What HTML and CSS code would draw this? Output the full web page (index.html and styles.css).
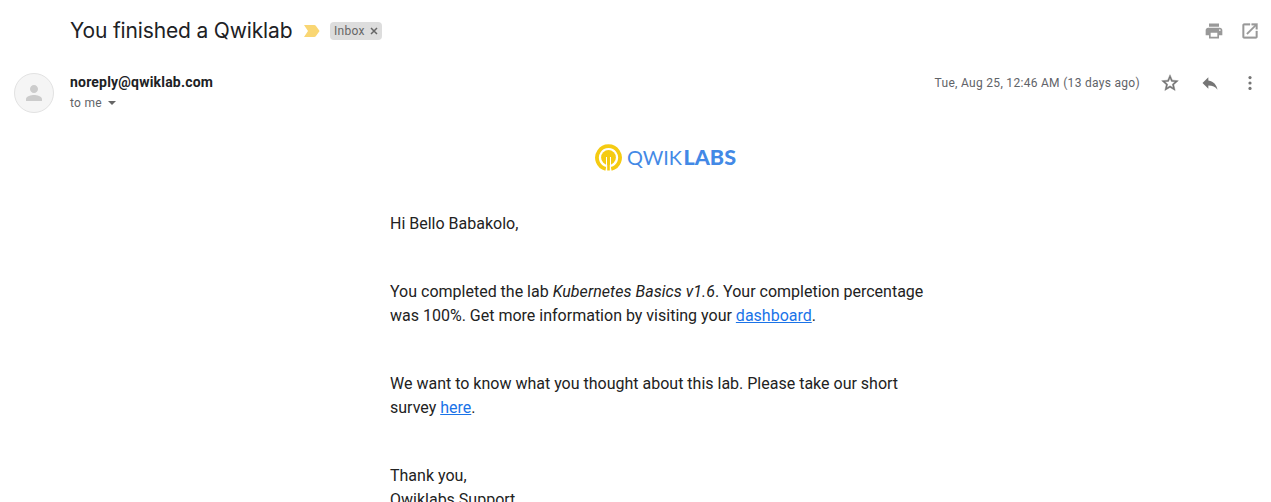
FILE: index.html
```html
<!DOCTYPE html>
<html lang="en">
<head>
<meta charset="utf-8">
<title>You finished a Qwiklab</title>
<link rel="stylesheet" href="styles.css">
</head>
<body>
<main class="mail">
  <header class="subject-row">
    <h1 class="subject">You finished a Qwiklab</h1>
    <svg class="importance" width="16" height="12" viewBox="0 0 16 12"><path fill="#f9d673" d="M0 0h10.2q1 0 1.600.8L15.600 6l-3.800 5.200q-.6.8-1.600.8H0L4 6z"/></svg>
    <span class="label"><span class="label-name">Inbox</span><svg width="8" height="8" viewBox="0 0 8 8"><path d="M1 1l6 6M7 1L1 7" stroke="#666" stroke-width="1.500"/></svg></span>
    <div class="tools">
      <svg width="20" height="20" viewBox="0 0 24 24" fill="#999"><path d="M19 8H5c-1.660 0-3 1.340-3 3v6h4v4h12v-4h4v-6c0-1.660-1.340-3-3-3zm-3 11H8v-5h8v5zm3-7c-.55 0-1-.45-1-1s.45-1 1-1 1 .45 1 1-.45 1-1 1zm-1-9H6v4h12V3z"/></svg>
      <svg width="20" height="20" viewBox="0 0 24 24" fill="#999" stroke="#999" stroke-width=".4"><path d="M19 19H5V5h7V3H5c-1.110 0-2 .9-2 2v14c0 1.100.89 2 2 2h14c1.100 0 2-.9 2-2v-7h-2v7zM14 3v2h3.590l-9.830 9.830 1.410 1.410L19 6.410V10h2V3h-7z"/></svg>
    </div>
  </header>
  <section class="sender-row">
    <div class="avatar"><svg width="24" height="24" viewBox="0 0 24 24" fill="#cccccc"><path d="M12 12c2.210 0 4-1.790 4-4s-1.790-4-4-4-4 1.790-4 4 1.790 4 4 4zm0 2c-2.670 0-8 1.340-8 4v2h16v-2c0-2.660-5.330-4-8-4z"/></svg></div>
    <div class="sender">
      <div class="address">noreply@qwiklab.com</div>
      <div class="recipient">to me<svg width="8" height="4" viewBox="0 0 8 4"><path fill="#666" d="M0 0h8L4 4z"/></svg></div>
    </div>
    <time class="date">Tue, Aug 25, 12:46 AM (13 days ago)</time>
    <div class="actions">
      <svg width="20" height="20" viewBox="0 0 24 24" fill="#757575" stroke="#757575" stroke-width=".5"><path d="M22 9.240l-7.190-.62L12 2 9.190 8.630 2 9.240l5.460 4.730L5.820 21 12 17.270 18.180 21l-1.630-7.030L22 9.240zM12 15.400l-3.760 2.270 1-4.280-3.320-2.880 4.380-.38L12 6.100l1.710 4.040 4.380.38-3.320 2.880 1 4.280L12 15.400z"/></svg>
      <svg width="20" height="20" viewBox="0 0 24 24" fill="#757575"><path d="M10 9V5l-7 7 7 7v-4.100c5 0 8.500 1.600 11 5.100-1-5-4-10-11-11z"/></svg>
      <svg width="20" height="20" viewBox="0 0 20 20" fill="#757575"><circle cx="10" cy="4.600" r="1.600"/><circle cx="10" cy="10" r="1.600"/><circle cx="10" cy="15.400" r="1.600"/></svg>
    </div>
  </section>
  <article class="message">
    <svg class="logo" width="142" height="28" viewBox="0 0 142 28">
      <path fill="none" stroke="#f5cb12" stroke-width="3.800" d="M10.800 24.900A11.500 11.500 0 1 1 16.200 24.900"/>
      <circle cx="13.500" cy="13.500" r="7.400" fill="#f5cb12"/>
      <path fill="#f5cb12" d="M12.200 18h2.600v8.500h-2.600z"/>
      <path fill="none" stroke="#fff" stroke-width="1" d="M11.500 27V13M15.500 27V13"/>
      <text class="logo-light" x="32" y="20.500" textLength="55" lengthAdjust="spacingAndGlyphs">QWIK</text>
      <text class="logo-bold" x="88.500" y="20.500" textLength="52.500" lengthAdjust="spacingAndGlyphs">LABS</text>
    </svg>
    <p>Hi Bello Babakolo,</p>
    <p>You completed the lab <em>Kubernetes Basics v1.6</em>. Your completion percentage was 100%. Get more information by visiting your <a href="#">dashboard</a>.</p>
    <p>We want to know what you thought about this lab. Please take our short survey <a href="#">here</a>.</p>
    <p>Thank you,<br>Qwiklabs Support</p>
  </article>
</main>
</body>
</html>
```

FILE: styles.css
```css
* { box-sizing: border-box; }
body {
  margin: 0;
  background: #fff;
  color: #222;
  font-family: Roboto, "Liberation Sans", sans-serif;
  overflow: hidden;
}
svg { display: block; flex: none; }
.mail { height: 502px; overflow: hidden; }
.subject-row {
  display: flex;
  align-items: center;
  height: 62px;
  padding: 0 11px 0 70px;
}
.subject {
  margin: 0;
  width: 222px;
  font: 400 21px/28px Inter, sans-serif;
  letter-spacing: -0.15px;
  white-space: nowrap;
  color: #202124;
}
.importance { margin-left: 12px; }
.label {
  display: flex;
  align-items: center;
  gap: 5px;
  height: 18px;
  margin-left: 10px;
  padding: 0 4px;
  border-radius: 4px;
  background: #ddd;
  color: #666;
  font-size: 12px;
  letter-spacing: 0.3px;
}
.tools, .actions { display: flex; }
.tools { gap: 16px; margin-left: auto; }
.actions { gap: 20px; margin-left: 20px; }
.sender-row {
  display: flex;
  align-items: flex-start;
  height: 82px;
  padding: 11px 11px 0 14px;
}
.avatar {
  display: grid;
  place-items: center;
  width: 40px;
  height: 40px;
  border: 1px solid #e2e2e2;
  border-radius: 50%;
  background: #f5f5f5;
}
.sender { margin-left: 16px; }
.address {
  height: 20px;
  font-size: 14px;
  font-weight: 700;
  line-height: 18px;
  letter-spacing: 0.2px;
  color: #202124;
}
.recipient {
  display: flex;
  align-items: center;
  gap: 6px;
  font-size: 12px;
  line-height: 20px;
  letter-spacing: 0.3px;
  color: #5f6368;
}
.date {
  margin-left: auto;
  font-size: 12px;
  line-height: 20px;
  letter-spacing: 0.3px;
  color: #5f6368;
}
.message {
  width: 551px;
  margin-left: 390px;
  font-size: 16px;
  line-height: 24px;
}
.message p { margin: 0 0 44px; }
.message a { color: #1a73e8; }
.message em { letter-spacing: 0.04px; }
.logo { margin: 0 0 40px 205px; }
.logo-light, .logo-bold {
  fill: #4389e6;
  font-family: Lato, sans-serif;
  font-size: 20px;
}
.logo-bold { font-weight: 900; }
```
